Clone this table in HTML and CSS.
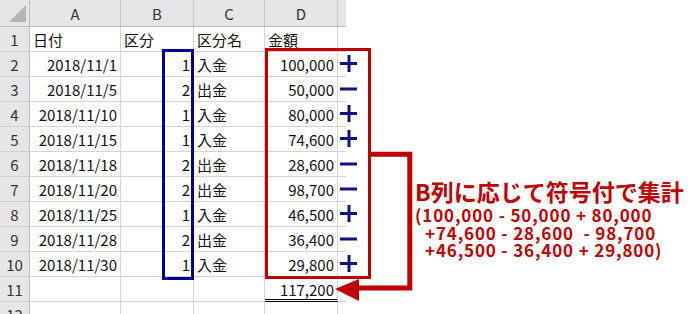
FILE: index.html
```html
<!DOCTYPE html>
<html lang="ja">
<head>
<meta charset="utf-8">
<link rel="stylesheet" href="styles.css">
</head>
<body>
<div class="page">
  <div class="sheet">
    <div class="hdr corner"><svg class="tri" width="18" height="18" viewBox="0 0 18 18"><polygon points="18,0 18,17 1,17" fill="#b5b5b5"/></svg></div>
    <div class="hdr col">A</div>
    <div class="hdr col">B</div>
    <div class="hdr col">C</div>
    <div class="hdr col">D</div>
    <div class="hdr col e"></div>

    <div class="hdr row">1</div><div class="cell">日付</div><div class="cell">区分</div><div class="cell">区分名</div><div class="cell">金額</div><div class="cell e"></div>
    <div class="hdr row">2</div><div class="cell r">2018/11/1</div><div class="cell r">1</div><div class="cell">入金</div><div class="cell r">100,000</div><div class="cell e"></div>
    <div class="hdr row">3</div><div class="cell r">2018/11/5</div><div class="cell r">2</div><div class="cell">出金</div><div class="cell r">50,000</div><div class="cell e"></div>
    <div class="hdr row">4</div><div class="cell r">2018/11/10</div><div class="cell r">1</div><div class="cell">入金</div><div class="cell r">80,000</div><div class="cell e"></div>
    <div class="hdr row">5</div><div class="cell r">2018/11/15</div><div class="cell r">1</div><div class="cell">入金</div><div class="cell r">74,600</div><div class="cell e"></div>
    <div class="hdr row">6</div><div class="cell r">2018/11/18</div><div class="cell r">2</div><div class="cell">出金</div><div class="cell r">28,600</div><div class="cell e"></div>
    <div class="hdr row">7</div><div class="cell r">2018/11/20</div><div class="cell r">2</div><div class="cell">出金</div><div class="cell r">98,700</div><div class="cell e"></div>
    <div class="hdr row">8</div><div class="cell r">2018/11/25</div><div class="cell r">1</div><div class="cell">入金</div><div class="cell r">46,500</div><div class="cell e"></div>
    <div class="hdr row">9</div><div class="cell r">2018/11/28</div><div class="cell r">2</div><div class="cell">出金</div><div class="cell r">36,400</div><div class="cell e"></div>
    <div class="hdr row">10</div><div class="cell r">2018/11/30</div><div class="cell r">1</div><div class="cell">入金</div><div class="cell r">29,800</div><div class="cell e"></div>
    <div class="hdr row">11</div><div class="cell"></div><div class="cell"></div><div class="cell"></div><div class="cell r total">117,200</div><div class="cell e"></div>
    <div class="hdr row">12</div><div class="cell"></div><div class="cell"></div><div class="cell"></div><div class="cell"></div><div class="cell e"></div>
  </div>

  <svg class="overlay" width="700" height="314" viewBox="0 0 700 314">
    <rect x="163.5" y="50.5" width="29" height="228" fill="none" stroke="#000090" stroke-width="3"/>
    <rect x="266.5" y="49.5" width="103" height="228" fill="none" stroke="#c00000" stroke-width="3"/>
    <g fill="#10108c">
      <rect x="340" y="62" width="17" height="3"/><rect x="347.5" y="55" width="3" height="17"/>
      <rect x="340" y="87.5" width="17" height="3"/>
      <rect x="340" y="112" width="17" height="3"/><rect x="347.5" y="105" width="3" height="17"/>
      <rect x="340" y="137" width="17" height="3"/><rect x="347.5" y="130" width="3" height="17"/>
      <rect x="340" y="162.5" width="17" height="3"/>
      <rect x="340" y="187.5" width="17" height="3"/>
      <rect x="340" y="212" width="17" height="3"/><rect x="347.5" y="205" width="3" height="17"/>
      <rect x="340" y="237.5" width="17" height="3"/>
      <rect x="340" y="262" width="17" height="3"/><rect x="347.5" y="255" width="3" height="17"/>
    </g>
    <polyline points="371,154.2 409.8,154.2 409.8,288 357,288" fill="none" stroke="#c00000" stroke-width="5" stroke-linejoin="miter"/>
    <polygon points="335,289 359,279 359,301" fill="#c00000"/>
  </svg>

  <div class="note">
    <div class="note-title">B列に応じて符号付で集計</div>
    <div class="note-line">(100,000 - 50,000 + 80,000</div>
    <div class="note-line ind">+74,600 - 28,600  - 98,700</div>
    <div class="note-line ind">+46,500 - 36,400 + 29,800)</div>
  </div>
</div>
</body>
</html>
```

FILE: styles.css
```css
html, body {
  margin: 0;
  padding: 0;
  background: #ffffff;
  overflow: hidden;
}

.page {
  position: relative;
  width: 700px;
  height: 314px;
  overflow: hidden;
  font-family: "Noto Sans CJK JP", "Noto Sans", sans-serif;
}

.sheet {
  display: grid;
  grid-template-columns: 30px 91px 73px 71px 73px 8px;
  grid-template-rows: 27px repeat(12, 25px);
  width: 346px;
  font-size: 15px;
  color: #111;
}

.hdr {
  background: #e6e6e6;
  color: #333;
  display: flex;
  align-items: center;
  justify-content: center;
  box-sizing: border-box;
  line-height: 1;
}

.hdr.corner {
  border-right: 1px solid #bdbdbd;
  border-bottom: 1px solid #bdbdbd;
  align-items: flex-end;
  justify-content: flex-end;
  padding: 0 3px 3px 0;
}

.tri {
  display: block;
}

.hdr.col {
  border-right: 1px solid #c6c6c6;
  border-bottom: 1px solid #bdbdbd;
  padding-top: 1px;
}

.hdr.col.e {
  border-right: none;
}

.hdr.row {
  border-right: 1px solid #bdbdbd;
  border-bottom: 1px solid #d0d0d0;
  padding-top: 1px;
}

.cell {
  box-sizing: border-box;
  border-right: 1px solid #d4d4d4;
  border-bottom: 1px solid #d4d4d4;
  display: flex;
  align-items: center;
  padding: 0 3px 0 3px;
  line-height: 1;
  white-space: nowrap;
}

.cell.r {
  justify-content: flex-end;
}

.cell.e {
  border-right: none;
}

.cell.total {
  border-bottom: 3px double #000;
  padding-top: 2px;
}

.overlay {
  position: absolute;
  left: 0;
  top: 0;
  pointer-events: none;
}

.note {
  position: absolute;
  left: 415px;
  top: 177px;
  color: #c00000;
  font-weight: bold;
  font-family: "Noto Sans CJK JP", sans-serif;
}

.note-title {
  font-size: 23px;
  line-height: 29px;
  white-space: nowrap;
}

.note-line {
  font-size: 17px;
  line-height: 17.5px;
  letter-spacing: 0.85px;
  white-space: pre;
}

.note-line.ind {
  padding-left: 10px;
}
```
